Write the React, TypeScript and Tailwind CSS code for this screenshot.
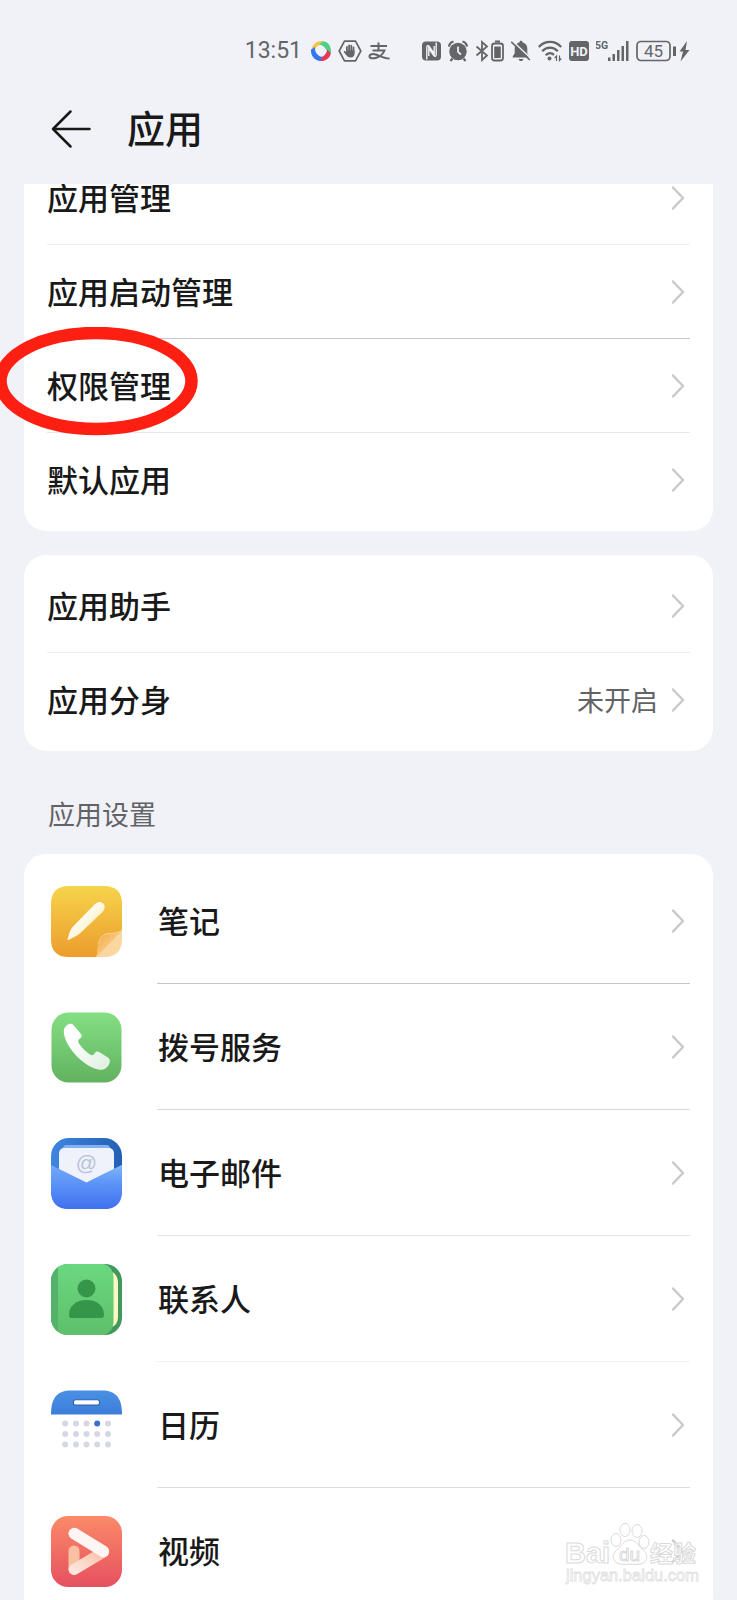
import type { ReactNode } from "react";

const INK = "#636569";

function Chevron() {
  return (
    <svg className="h-[26px] w-[14px] shrink-0" viewBox="0 0 14 26" fill="none" aria-hidden="true">
      <path d="M2 2.500 12 13 2 23.500" stroke="#c9c9cb" strokeWidth="2.500" strokeLinecap="round" strokeLinejoin="round" />
    </svg>
  );
}

function StatusBar() {
  return (
    <div className="flex h-[101px] shrink-0 items-center justify-end gap-8 pr-[47px] text-[#636569]">
      <div className="flex items-center gap-[6px]">
        <span className="pr-[2px] font-['Roboto','Noto_Sans_CJK_SC',sans-serif] text-[23px] leading-6">13:51</span>
        <svg className="h-[22px] w-[22px]" viewBox="0 0 22 22" aria-hidden="true">
          <path d="M1.800 8.500C3 3.500 8 .2 13.500 1.200L13 4C9.500 4 6.500 6 5 9.500z" fill="#f3c646" />
          <path d="M9 4.500 13.500 1.200C18.500 2 21.500 6.500 21 13l-3.500 1C17.300 9.500 14 5.500 9 4.500z" fill="#4fd089" />
          <path d="M17.300 9.500 20.800 13.500C20 18 15.500 21.500 9.800 21L9 17.500c4-.2 7.500-3.200 8.300-8z" fill="#ea3557" />
          <path d="M13 17.300 9.800 21C4.500 20.500.5 15.500 1 9.500l4-2.500c-.8 4.500 2.500 9.300 8 10.300z" fill="#3478f0" />
        </svg>
        <svg className="h-[22px] w-6" viewBox="0 0 24 22" fill="none" aria-hidden="true">
          <path d="M6.500 1.200h11L22.800 11l-5.300 9.800h-11L1.200 11z" stroke={INK} strokeWidth="1.700" strokeLinejoin="round" />
          <path d="M8.900 7v6M11.100 5.300v7M13.300 5.600v7M15.500 7.400v6" stroke={INK} strokeWidth="1.800" strokeLinecap="round" />
          <path d="M8 10.500h8.400v3.500c0 2-1.400 3.500-3.600 3.500-2.300 0-3.400-.8-4.700-2.500l-2.300-3c-.4-.9.7-1.500 1.400-.8L8 12z" fill={INK} />
        </svg>
        <svg className="h-[22px] w-[22px]" viewBox="0 0 22 22" fill="none" stroke={INK} strokeWidth="2" aria-hidden="true">
          <path d="M2.500 6h16.500M10.500 2.500v8M4.500 10.500h12c-1.300 3.500-4.500 6-8 7.200-3.500 1.200-7 .8-7-1.500 0-2.200 3.400-2.800 7-1.400 4 1.600 8 3.700 13 3.700" />
        </svg>
      </div>
      <div className="flex items-center gap-[7px]">
        <svg className="h-[22px] w-[19px]" viewBox="0 0 19 22" aria-hidden="true">
          <rect y="1.500" width="19" height="19" rx="4" fill={INK} />
          <path d="M4.800 19.500V7.500c0-2 1.300-2.400 2.400-1l5 7.200V6M14.200 2.500v12c0 2-1.300 2.400-2.400 1l-5-7.200V16" stroke="#f1f2f7" strokeWidth="1.400" fill="none" />
        </svg>
        <svg className="h-[22px] w-5" viewBox="0 0 20 22" aria-hidden="true">
          <circle cx="10" cy="11.500" r="8.700" fill={INK} />
          <path d="M1 6.500C1.300 4 3 2.200 5.500 1.500M19 6.500C18.700 4 17 2.200 14.500 1.500M4.500 18.500 2.500 21M15.500 18.500l2 2.500" stroke={INK} strokeWidth="2.200" fill="none" />
          <path d="M10 6.500v5.300l3 2.700" stroke="#f1f2f7" strokeWidth="1.700" fill="none" />
        </svg>
        <svg className="h-[22px] w-[29px]" viewBox="0 0 29 22" fill="none" stroke={INK} aria-hidden="true">
          <path d="M1.500 6.500 12 15.500 7 20V2l5 4.500L1.500 15.500" strokeWidth="1.800" />
          <rect x="17" y="3.500" width="11" height="17" rx="2.500" strokeWidth="1.800" />
          <path d="M20 1.500h5" strokeWidth="2" />
          <path d="M19.200 6.500h6.600v11.500h-6.600z" fill={INK} stroke="none" />
        </svg>
        <svg className="h-[22px] w-5" viewBox="0 0 20 22" aria-hidden="true">
          <path d="M10 .8c.9 0 1.500.6 1.500 1.500 3 .8 4.800 3.200 4.800 6.200v4.700l2 3.300v1H1.700v-1l2-3.300V8.500c0-3 1.800-5.400 4.800-6.200 0-.9.600-1.500 1.500-1.500zM7.500 19h5c-.3 1.300-1.300 2.100-2.500 2.100S7.800 20.300 7.500 19z" fill={INK} />
          <path d="M1.500 1 20 18.500" stroke="#f1f2f7" strokeWidth="1.600" />
          <path d="M.3 1.800 18.800 20" stroke={INK} strokeWidth="1.600" />
        </svg>
        <svg className="h-[22px] w-6" viewBox="0 0 24 22" fill="none" stroke={INK} aria-hidden="true">
          <path d="M.8 7C7 .2 17 .2 23.200 7M4.200 11.200c4.500-4.800 11-4.800 15.600 0M7.700 15.200c2.500-2.700 5.800-2.700 8.300-.4" strokeWidth="2.300" />
          <circle cx="11.500" cy="18.500" r="2" fill={INK} stroke="none" />
          <path d="M18.500 21v-5l-1.800 2M21.500 15.500v5l1.800-2" strokeWidth="1.200" />
        </svg>
        <svg className="h-[22px] w-5" viewBox="0 0 20 22" aria-hidden="true">
          <rect y="1" width="20" height="20" rx="3" fill={INK} />
          <text x="10" y="15.800" textAnchor="middle" fontFamily="Roboto, sans-serif" fontWeight="700" fontSize="13" fill="#f1f2f7">HD</text>
        </svg>
        <svg className="h-[22px] w-[33px]" viewBox="0 0 33 22" aria-hidden="true">
          <text x="-1" y="8.500" fontFamily="Roboto, sans-serif" fontWeight="700" fontSize="10.500" fill={INK}>5G</text>
          <path d="M12 17.500h2.500V21H12zM16.500 14h2.500v7h-2.500zM21 10h2.500v11H21zM25.500 6h2.500v15h-2.500zM30 1h2.500v20H30z" fill={INK} />
        </svg>
        <svg className="h-[22px] w-[54px]" viewBox="0 0 54 22" aria-hidden="true">
          <rect x="1" y="1.500" width="33" height="19" rx="4" fill="none" stroke={INK} strokeWidth="1.700" />
          <text x="17.500" y="17" textAnchor="middle" fontFamily="Roboto, sans-serif" fontSize="17" fill={INK}>45</text>
          <path d="M37 6.500h3v9.500h-3zM51 1l-7.500 10.500h3.500L44.500 21.500l9-11.500h-4z" fill={INK} />
        </svg>
      </div>
    </div>
  );
}

function NotesIcon() {
  return (
    <svg className="h-[71px] w-[71px] shrink-0" viewBox="0 0 71 71" aria-hidden="true">
      <defs>
        <linearGradient id="notesBg" x1="0" y1="0" x2="0" y2="1">
          <stop offset="0" stopColor="#f6d44b" />
          <stop offset="1" stopColor="#eb9c2c" />
        </linearGradient>
        <linearGradient id="notesPen" x1="0" y1="0" x2="1" y2="1">
          <stop offset="0.300" stopColor="#ffffff" />
          <stop offset="0.700" stopColor="#fdf0c4" />
        </linearGradient>
        <linearGradient id="notesFold" x1="0" y1="0" x2="1" y2="1">
          <stop offset="0" stopColor="#f3a53c" />
          <stop offset="1" stopColor="#fce0b0" />
        </linearGradient>
      </defs>
      <path d="M18 0h35c12 0 18 6 18 18v27L45 71H18C6 71 0 65 0 53V18C0 6 6 0 18 0z" fill="url(#notesBg)" />
      <path d="M17 54c-.8-.4-.5-1 0-2 1.500-6 2.500-8.500 5.500-12L43.500 18.500c3.500-3.300 6.500-3.200 8.700-1s2.200 5.500-1 8.700L30 46.500C26.500 50 22 51.500 18.500 53.500c-.5.4-1 .6-1.500.5z" fill="url(#notesPen)" />
      <path d="M45 71c2-3 1-8 2.500-13.500C49 51.500 52 48 58 47.500c6-.2 10-1 13-3.500v9c0 12-6 18-18 18z" fill="#fad7a1" />
      <path d="M45 71c2-3 1-8 2.500-13.500C49 51.500 52 48 58 47.500c6-.2 10-1 13-3.500C64 52 55 61 45 71z" fill="url(#notesFold)" />
      <path d="M47.500 57.500C49 51.500 52 48 58 47.500c6-.2 10-1 13-3.500" stroke="#fbd595" strokeWidth=".8" fill="none" />
    </svg>
  );
}

function PhoneIcon() {
  return (
    <svg className="h-[71px] w-[71px] shrink-0" viewBox="0 0 71 71" aria-hidden="true">
      <defs>
        <linearGradient id="phoneBg" x1="0" y1="0" x2="0" y2="1">
          <stop offset="0" stopColor="#84df83" />
          <stop offset="1" stopColor="#62b260" />
        </linearGradient>
        <linearGradient id="phoneSet" x1="0" y1="0" x2="1" y2="1">
          <stop offset="0.300" stopColor="#ffffff" />
          <stop offset="1" stopColor="#dcefdc" />
        </linearGradient>
      </defs>
      <rect x=".5" y=".5" width="70" height="70" rx="17" fill="url(#phoneBg)" />
      <path d="M15.500 13.500c2.500-2.200 5.500-2.200 7.500.2l7 8.300c1.500 2 .8 3.300-1 4.500-1.800 1.300-2.500 2.500-1 5 3 4.800 7 8.300 11 11 2 1.300 3.300.8 4.500-1 1.300-2 3-2.500 5-1.300l8.500 5.300c2.300 1.500 2.500 4.300 1 7-2 3.800-5.500 5.800-9.500 5.200-8-1.500-17-7-24-15C17 34.500 13.500 27 12.800 20.500c-.2-3 .7-5.200 2.700-7z" fill="url(#phoneSet)" />
    </svg>
  );
}

function MailIcon() {
  return (
    <svg className="h-[71px] w-[71px] shrink-0" viewBox="0 0 71 71" aria-hidden="true">
      <defs>
        <linearGradient id="mailBack" x1="0" y1="0" x2="1" y2="0">
          <stop offset="0" stopColor="#3f86e0" />
          <stop offset="1" stopColor="#245fb4" />
        </linearGradient>
        <linearGradient id="mailFront" x1="0" y1="0" x2="0" y2="1">
          <stop offset="0" stopColor="#73a9f8" />
          <stop offset="0.500" stopColor="#588ff6" />
          <stop offset="1" stopColor="#3f70ef" />
        </linearGradient>
        <linearGradient id="mailFlap" x1="0" y1="0" x2="0" y2="1">
          <stop offset="0" stopColor="#82b9fb" />
          <stop offset="1" stopColor="#4d85f3" stopOpacity="0.200" />
        </linearGradient>
      </defs>
      <rect width="71" height="71" rx="18" fill="url(#mailBack)" />
      <path d="M14 7h43l5 6v20H9V13z" fill="#83b0ef" />
      <path d="M14 10h43c4 0 6 2 6 6v32H8V16c0-4 2-6 6-6z" fill="#eff2fb" />
      <text x="35.500" y="31.500" textAnchor="middle" fontFamily="Liberation Sans, sans-serif" fontSize="21" fill="#b9c1da">@</text>
      <path d="M0 27l35.500 17.500L71 27v26c0 12-6 18-18 18H18C6 71 0 65 0 53z" fill="url(#mailFront)" />
      <path d="M0 53 35.500 44.500 71 27v26L35.500 44.500z" fill="url(#mailFlap)" />
    </svg>
  );
}

function ContactsIcon() {
  return (
    <svg className="h-[71px] w-[71px] shrink-0" viewBox="0 0 71 71" aria-hidden="true">
      <defs>
        <linearGradient id="bookCover" x1="0" y1="0" x2="0" y2="1">
          <stop offset="0" stopColor="#6ad880" />
          <stop offset="1" stopColor="#5fbf6b" />
        </linearGradient>
        <clipPath id="bookShape">
          <rect width="71" height="71" rx="17" />
        </clipPath>
      </defs>
      <g clipPath="url(#bookShape)">
        <rect width="71" height="71" fill="#42975a" />
        <path d="M61 8c4 2 6 6 6 11v33c0 6-2 9-6 11z" fill="#fcf8c4" />
        <path d="M0 0h53c6 2 9 6 9.500 13v45c-.5 7-3.500 11-9.500 13H0z" fill="url(#bookCover)" />
        <path d="M0 0h7v71H0z" fill="#54b26b" />
      </g>
      <circle cx="35.500" cy="24.500" r="9" fill="#35964a" />
      <path d="M18 51c0-9 7-15 17.500-15S53 42 53 51c0 2-.8 3-2.500 3h-30C18.800 54 18 53 18 51z" fill="#35964a" />
    </svg>
  );
}

function CalendarIcon() {
  const dots: ReactNode[] = [];
  [33.500, 44, 54.500].forEach((y, row) =>
    [14.200, 25, 35.500, 46.200, 57].forEach((x, col) =>
      dots.push(<circle key={`${row}-${col}`} cx={x} cy={y} r="3" fill={row === 0 && col === 3 ? "#3c6fd2" : "#d5d7e5"} />)
    )
  );
  return (
    <svg className="h-[71px] w-[71px] shrink-0" viewBox="0 0 71 71" aria-hidden="true">
      <defs>
        <linearGradient id="calTop" x1="0" y1="0" x2="0" y2="1">
          <stop offset="0" stopColor="#4a90e4" />
          <stop offset="1" stopColor="#3c7edb" />
        </linearGradient>
      </defs>
      <path d="M0 24.500C0 8 6 .5 20 .5h31c14 0 20 7.500 20 24z" fill="url(#calTop)" />
      <rect x="22" y="9.500" width="27" height="6" rx="2.500" fill="#2c5ea8" />
      <rect x="23" y="10.200" width="25" height="4.400" rx="1.500" fill="#ffffff" />
      {dots}
    </svg>
  );
}

function VideoIcon() {
  return (
    <svg className="h-[71px] w-[71px] shrink-0" viewBox="0 0 71 71" aria-hidden="true">
      <defs>
        <linearGradient id="videoBg" x1="0" y1="0" x2="0" y2="1">
          <stop offset="0" stopColor="#fb8a68" />
          <stop offset="1" stopColor="#e65060" />
        </linearGradient>
        <linearGradient id="videoLow" x1="0" y1="1" x2="1" y2="0">
          <stop offset="0" stopColor="#fde5dc" />
          <stop offset="1" stopColor="#fbc0a6" />
        </linearGradient>
      </defs>
      <rect width="71" height="71" rx="17" fill="url(#videoBg)" />
      <path d="M23 35v18" stroke="#fac0a2" strokeWidth="11" strokeLinecap="round" />
      <path d="M23 53.500 52.500 36" stroke="url(#videoLow)" strokeWidth="11" strokeLinecap="round" />
      <path d="M23.200 17.500 52.500 35.500" stroke="#fff6f3" strokeWidth="11.500" strokeLinecap="round" />
    </svg>
  );
}

type Row = { label: string; value?: string; line?: string; circled?: boolean };

function SettingRow({ label, value, line = "border-transparent", circled }: Row) {
  return (
    <li className="relative px-[23px]">
      <button type="button" className={`flex h-[94px] w-full items-center border-b pr-[5px] text-left ${line}`}>
        <span className="flex-1 pb-[2px] text-[31px] leading-10 font-medium">{label}</span>
        {value && <span className="mr-[13px] text-[27px] leading-9 text-[#636366]">{value}</span>}
        <Chevron />
      </button>
      {circled && (
        <svg className="pointer-events-none absolute -top-3 -left-[31px] z-10 h-[110px] w-[206px]" viewBox="0 0 206 110" aria-hidden="true">
          <ellipse cx="103" cy="54" rx="95.500" ry="48" fill="none" stroke="#fd1f12" strokeWidth="12.500" />
        </svg>
      )}
    </li>
  );
}

type AppEntry = { label: string; icon: ReactNode; line: string };

function AppRow({ label, icon, line }: AppEntry) {
  return (
    <li className="pr-[23px] pl-[27px]">
      <button type="button" className="flex w-full items-center gap-[35px] text-left">
        {icon}
        <span className={`flex h-[126px] flex-1 items-center border-b pr-[5px] ${line}`}>
          <span className="flex-1 pb-[2px] pl-px text-[31px] leading-10 font-medium">{label}</span>
          <Chevron />
        </span>
      </button>
    </li>
  );
}

function Watermark() {
  return (
    <svg className="pointer-events-none absolute right-[36px] bottom-3 h-[72px] w-[138px]" viewBox="0 0 138 72" aria-hidden="true">
      <g fill="#ffffff" fillOpacity="0.800" stroke="#dadadc" strokeWidth="1">
        <ellipse cx="53" cy="24" rx="5" ry="6.500" />
        <ellipse cx="62" cy="14" rx="5" ry="6.500" />
        <ellipse cx="74" cy="15" rx="5" ry="6.500" />
        <ellipse cx="81" cy="26" rx="5" ry="6.500" />
        <path d="M67 24c6 0 8 5 12 9 4 3 6 7 4 11-2 4-7 5-16 4-9 1-14 0-16-4-2-4 0-8 4-11 4-4 6-9 12-9z" />
        <g fontFamily="Liberation Sans, Noto Sans CJK SC, sans-serif" fontWeight="700">
          <text x="2" y="47" fontSize="29">Bai</text>
          <text x="56" y="45" fontSize="19" fontWeight="400">du</text>
          <text x="87" y="46" fontSize="23">经验</text>
        </g>
      </g>
      <text x="3" y="65" fontFamily="Liberation Sans, sans-serif" fontSize="16.500" fill="#ffffff" stroke="#e0e0e1" strokeWidth=".8">jingyan.baidu.com</text>
    </svg>
  );
}

const general: Row[] = [
  { label: "应用管理", line: "border-[#eeeeef]" },
  { label: "应用启动管理", line: "border-[#c6c6c8]" },
  { label: "权限管理", line: "border-[#e8e8e9]", circled: true },
  { label: "默认应用" },
];

const helpers: Row[] = [
  { label: "应用助手", line: "border-[#ededee]" },
  { label: "应用分身", value: "未开启" },
];

const apps: AppEntry[] = [
  { label: "笔记", icon: <NotesIcon />, line: "border-[#c6c6c8]" },
  { label: "拨号服务", icon: <PhoneIcon />, line: "border-[#d9d9da]" },
  { label: "电子邮件", icon: <MailIcon />, line: "border-[#e6e6e7]" },
  { label: "联系人", icon: <ContactsIcon />, line: "border-[#f1f1f2]" },
  { label: "日历", icon: <CalendarIcon />, line: "border-[#dcdcdd]" },
  { label: "视频", icon: <VideoIcon />, line: "border-transparent" },
];

export default function App() {
  return (
    <div className="relative flex h-screen flex-col overflow-hidden bg-[#f1f2f7] font-['Noto_Sans_CJK_SC',sans-serif] text-[#191919]">
      <StatusBar />
      <header className="flex h-[83px] shrink-0 items-center gap-9 pb-[28px] pl-[51px]">
        <button type="button" aria-label="返回">
          <svg className="block h-10 w-10" viewBox="0 0 40 40" fill="none" stroke="#191919" strokeWidth="2.500" strokeLinecap="round" strokeLinejoin="round" aria-hidden="true">
            <path d="M38.500 20H2M19.500 2.500 2 20l17.500 17.500" />
          </svg>
        </button>
        <h1 className="pb-1 text-[38px] leading-[48px] font-medium">应用</h1>
      </header>
      <main className="min-h-0 flex-1 overflow-hidden">
        <ul className="mx-6 -mt-[37px] rounded-[22px] bg-white py-1">
          {general.map((row) => (
            <SettingRow key={row.label} {...row} />
          ))}
        </ul>
        <ul className="mx-6 mt-6 rounded-[22px] bg-white py-1">
          {helpers.map((row) => (
            <SettingRow key={row.label} {...row} />
          ))}
        </ul>
        <h2 className="mx-12 pt-[45px] pb-[22px] text-[27px] leading-9 text-[#636366]">应用设置</h2>
        <ul className="mx-6 rounded-[22px] bg-white py-1">
          {apps.map((app) => (
            <AppRow key={app.label} {...app} />
          ))}
        </ul>
      </main>
      <Watermark />
    </div>
  );
}
